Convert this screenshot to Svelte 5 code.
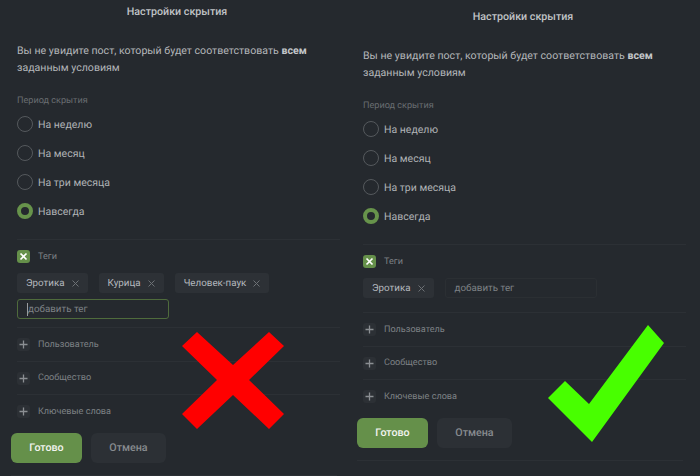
<script>
  const periods = ['На неделю', 'На месяц', 'На три месяца', 'Навсегда'];
  const filters = ['Пользователь', 'Сообщество', 'Ключевые слова'];

  const panels = [
    { id: 'bad', tags: ['Эротика', 'Курица', 'Человек-паук'], focused: true },
    { id: 'good', tags: ['Эротика'], focused: false }
  ];
</script>

<main class="page">
  {#each panels as panel}
    <section class="panel {panel.id}">
      <div class="dialog">
        <h2>Настройки скрытия</h2>
        <p class="intro">Вы не увидите пост, который будет соответствовать <b>всем</b> заданным условиям</p>

        <div class="period">
          <div class="caption">Период скрытия</div>
          {#each periods as period, i}
            <div class="radio-row">
              <span class="radio" class:checked={i === 3}></span>
              {period}
            </div>
          {/each}
        </div>

        <div class="filter tags-filter">
          <div class="filter-head">
            <span class="box on">
              <svg width="9" height="9" viewBox="0 0 9 9"><path d="M1.5 1.5l6 6M7.5 1.5l-6 6" stroke="#fff" stroke-width="1.7" /></svg>
            </span>
            Теги
          </div>
          <div class="tag-list">
            {#each panel.tags as tag}
              <span class="tag">
                {tag}
                <svg width="7" height="7" viewBox="0 0 7 7"><path d="M.5.5l6 6M6.5.5l-6 6" stroke="#6d7175" stroke-width="1" /></svg>
              </span>
            {/each}
            <div class="tag-input" class:focused={panel.focused}>
              {#if panel.focused}<span class="caret"></span>{/if}
              добавить тег
            </div>
          </div>
        </div>

        {#each filters as filter}
          <div class="filter">
            <div class="filter-head">
              <span class="box">
                <svg width="9" height="9" viewBox="0 0 9 9"><path d="M4.5 .5v8M.5 4.5h8" stroke="#8b8f93" stroke-width="1.3" /></svg>
              </span>
              {filter}
            </div>
          </div>
        {/each}

        <footer>
          <button class="done">Готово</button>
          <button class="cancel">Отмена</button>
        </footer>
      </div>

      {#if panel.id === 'bad'}
        <svg class="mark cross" width="103" height="97" viewBox="0 0 103 97">
          <polygon points="15,0 51,33 87,0 102,14 67,48 102,82 87,97 51,63 15,97 0,82 35,48 0,14" fill="#ff0000" />
        </svg>
      {:else}
        <svg class="mark tick" width="116" height="117" viewBox="0 0 116 117">
          <polygon points="100,0 116,18 44,117 0,73 17,56 41,79" fill="#48ff00" />
        </svg>
      {/if}
    </section>
  {/each}
</main>

<style>
  :global(body) {
    margin: 0;
    background: #25292e;
  }

  .page {
    display: flex;
    width: 700px;
    height: 476px;
    overflow: hidden;
    background: #25292e;
    font-family: Roboto, "Noto Sans", sans-serif;
    color: #b4b7ba;
    text-rendering: geometricPrecision;
  }

  .panel {
    position: relative;
    flex: none;
    height: 476px;
    overflow: hidden;
  }

  .panel.bad {
    width: 346px;
  }

  .panel.good {
    width: 354px;
    padding-top: 5px;
    box-sizing: border-box;
  }

  .dialog {
    width: 354px;
    box-sizing: border-box;
    padding: 0 17px;
  }

  h2 {
    margin: 0;
    height: 24px;
    line-height: 24px;
    font-size: 10.7px;
    font-weight: 500;
    text-align: center;
    color: #c0c3c6;
  }

  .intro {
    margin: 19px 0 0;
    font-size: 10.6px;
    line-height: 16.5px;
    color: #b4b7ba;
  }

  .intro b {
    font-weight: 700;
    color: #c4c7ca;
  }

  .period {
    margin-top: 17px;
    padding-bottom: 20px;
  }

  .caption {
    height: 16px;
    line-height: 16px;
    font-size: 9.1px;
    color: #696d71;
  }

  .radio-row {
    display: flex;
    align-items: center;
    gap: 5px;
    height: 16px;
    margin-top: 13px;
    font-size: 10.5px;
    color: #b0b3b6;
  }

  .caption + .radio-row {
    margin-top: 7px;
  }

  .radio {
    flex: none;
    width: 16px;
    height: 16px;
    box-sizing: border-box;
    border: 1px solid #55595d;
    border-radius: 50%;
  }

  .radio.checked {
    border: 4px solid #67934b;
  }

  .filter {
    margin-right: -3px;
    border-top: 1px solid #2c3035;
    padding: 10px 0 9.5px;
  }

  .filter-head {
    display: flex;
    align-items: center;
    gap: 8px;
    height: 13px;
    font-size: 9.1px;
    color: #7d8185;
  }

  .box {
    flex: none;
    display: flex;
    align-items: center;
    justify-content: center;
    width: 13px;
    height: 13px;
    border-radius: 3px;
    background: #2c3035;
  }

  .box.on {
    background: #65904a;
  }

  .tags-filter {
    padding-bottom: 8px;
  }

  .good .tags-filter {
    padding-bottom: 14px;
  }

  .tag-list {
    display: flex;
    flex-wrap: wrap;
    gap: 6px 11px;
    width: 290px;
    margin-top: 10px;
  }

  .tag {
    display: flex;
    align-items: center;
    gap: 7px;
    height: 20px;
    padding: 0 9px;
    border-radius: 3px;
    background: #2d3136;
    font-size: 9.8px;
    color: #b4b8be;
  }

  .tag-input {
    display: flex;
    align-items: center;
    width: 152px;
    height: 20px;
    box-sizing: border-box;
    padding-left: 9px;
    border: 1px solid #2b2f33;
    border-radius: 3px;
    font-size: 9.8px;
    color: #7d8185;
  }

  .tag-input.focused {
    border-color: #4f6b3c;
  }

  .caret {
    width: 1px;
    height: 13px;
    background: #9a9da0;
  }

  footer {
    display: flex;
    gap: 9px;
    margin: 5px 0 0 -6px;
    padding-bottom: 12px;
    border-bottom: 1px solid #2c3035;
  }

  button {
    height: 30px;
    border: 0;
    border-radius: 6px;
    padding: 0;
    font: 500 10.7px Roboto, "Noto Sans", sans-serif;
    text-rendering: geometricPrecision;
  }

  .done {
    width: 71px;
    background: #65904a;
    color: #f2f4f0;
  }

  .cancel {
    width: 75px;
    background: #2c3035;
    color: #878b8f;
  }

  .mark {
    position: absolute;
  }

  .cross {
    left: 182px;
    top: 332px;
  }

  .tick {
    left: 202px;
    top: 325px;
  }
</style>
